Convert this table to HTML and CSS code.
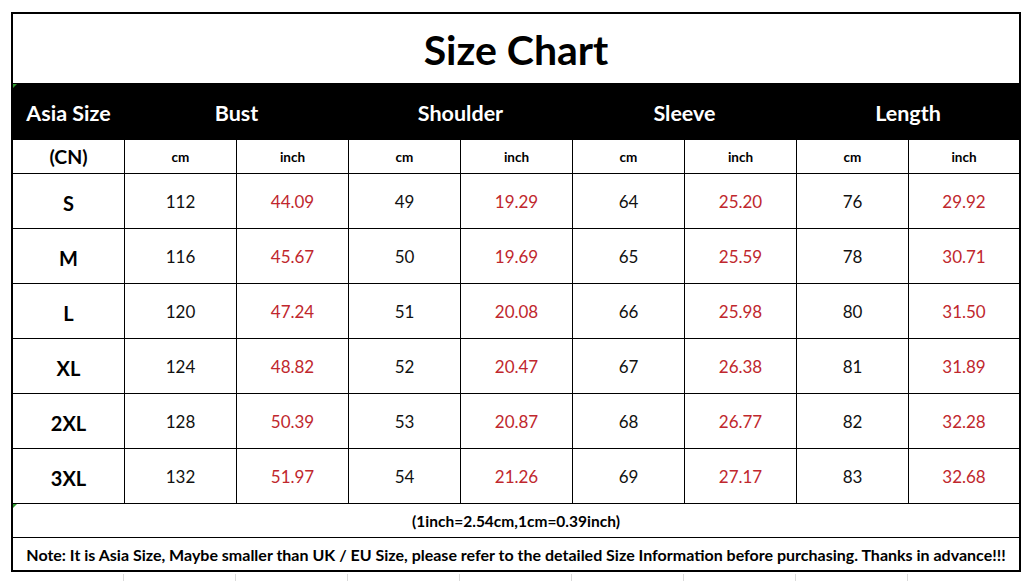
FILE: index.html
```html
<!DOCTYPE html>
<html lang="en">
<head>
<meta charset="utf-8">
<title>Size Chart</title>
<link rel="stylesheet" href="styles.css">
</head>
<body>
<div class="sheet">
  <div class="chart">
    <div class="title span-all">Size Chart</div>

    <div class="hd hd-first">Asia Size</div>
    <div class="hd span2">Bust</div>
    <div class="hd span2">Shoulder</div>
    <div class="hd span2">Sleeve</div>
    <div class="hd span2">Length</div>

    <div class="unit cn">(CN)</div>
    <div class="unit">cm</div><div class="unit">inch</div>
    <div class="unit">cm</div><div class="unit">inch</div>
    <div class="unit">cm</div><div class="unit">inch</div>
    <div class="unit">cm</div><div class="unit">inch</div>

    <div class="size">S</div>
    <div class="num">112</div><div class="num red">44.09</div>
    <div class="num">49</div><div class="num red">19.29</div>
    <div class="num">64</div><div class="num red">25.20</div>
    <div class="num">76</div><div class="num red">29.92</div>

    <div class="size">M</div>
    <div class="num">116</div><div class="num red">45.67</div>
    <div class="num">50</div><div class="num red">19.69</div>
    <div class="num">65</div><div class="num red">25.59</div>
    <div class="num">78</div><div class="num red">30.71</div>

    <div class="size">L</div>
    <div class="num">120</div><div class="num red">47.24</div>
    <div class="num">51</div><div class="num red">20.08</div>
    <div class="num">66</div><div class="num red">25.98</div>
    <div class="num">80</div><div class="num red">31.50</div>

    <div class="size">XL</div>
    <div class="num">124</div><div class="num red">48.82</div>
    <div class="num">52</div><div class="num red">20.47</div>
    <div class="num">67</div><div class="num red">26.38</div>
    <div class="num">81</div><div class="num red">31.89</div>

    <div class="size">2XL</div>
    <div class="num">128</div><div class="num red">50.39</div>
    <div class="num">53</div><div class="num red">20.87</div>
    <div class="num">68</div><div class="num red">26.77</div>
    <div class="num">82</div><div class="num red">32.28</div>

    <div class="size">3XL</div>
    <div class="num">132</div><div class="num red">51.97</div>
    <div class="num">54</div><div class="num red">21.26</div>
    <div class="num">69</div><div class="num red">27.17</div>
    <div class="num">83</div><div class="num red">32.68</div>

    <div class="conv span-all">(1inch=2.54cm,1cm=0.39inch)</div>
    <div class="note span-all">Note: It is Asia Size, Maybe smaller than UK / EU Size, please refer to the detailed Size Information before purchasing. Thanks in advance!!!</div>
  </div>
  <div class="gridlines">
    <span></span><span></span><span></span><span></span><span></span><span></span><span></span><span></span><span></span>
  </div>
</div>
</body>
</html>
```

FILE: styles.css
```css
html, body {
  margin: 0;
  padding: 0;
  background: #fff;
}

body {
  font-family: Lato, "Open Sans", "Liberation Sans", sans-serif;
  color: #000;
}

.sheet {
  padding: 12px 0 0 11px;
  width: 1010px;
}

.chart {
  position: relative;
  display: grid;
  grid-template-columns: 111px repeat(7, 111px) 1fr;
  grid-template-rows: 69px 55px 33px repeat(6, 54px) 33px 32px;
  gap: 1px;
  background: #000;
  border: 2px solid #000;
  width: 1006px;
}

.chart > div {
  background: #fff;
  display: flex;
  align-items: center;
  justify-content: center;
  white-space: nowrap;
}

.span-all { grid-column: 1 / -1; }
.span2 { grid-column: span 2; }

.title {
  font-size: 41px;
  font-weight: 700;
  padding-top: 1px;
}

.chart > .hd {
  background: #000;
  color: #fff;
  font-size: 21.5px;
  font-weight: 700;
  padding-top: 3px;
}

.chart > .hd-first::before,
.chart > .conv::before {
  content: "";
  position: absolute;
  left: 0;
  width: 0;
  height: 0;
  border-top: 4px solid #2f9a2f;
  border-right: 4px solid transparent;
}
.chart > .hd-first::before { top: 70px; }
.chart > .conv::before { top: 490px; }

.unit {
  font-size: 13.5px;
  font-weight: 700;
}

.unit.cn {
  font-size: 19.5px;
}

.size {
  font-size: 20px;
  font-weight: 700;
  padding-top: 3px;
}

.num {
  font-size: 17px;
  color: #111;
  padding-top: 1px;
}

.num.red {
  color: #c0272d;
}

.conv {
  font-size: 15.5px;
  font-weight: 700;
}

.note {
  font-size: 16px;
  font-weight: 700;
}

.gridlines {
  display: grid;
  grid-template-columns: 111px repeat(7, 112px) 1fr;
  height: 7px;
  margin-top: 2px;
  padding-left: 2px;
}

.gridlines span {
  border-right: 1px solid #dadada;
}
.gridlines span:last-child {
  border-right: none;
}
```
